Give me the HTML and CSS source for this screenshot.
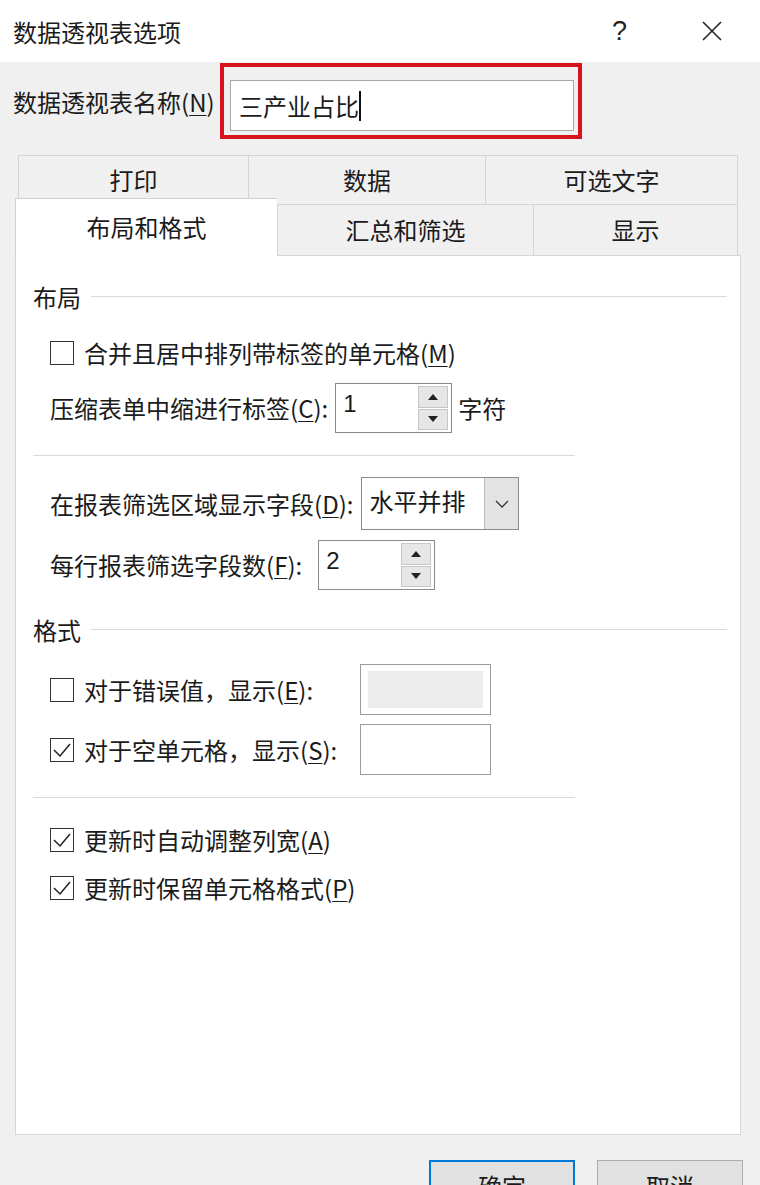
FILE: index.html
```html
<!DOCTYPE html>
<html lang="zh-CN">
<head>
    <meta charset="UTF-8">
    <meta name="viewport" content="width=device-width, initial-scale=1.0">
    <title>数据透视表选项</title>
    <link rel="stylesheet" href="styles.css">
</head>
<body>
    <div class="titlebar">
        <div class="title">数据透视表选项</div>
        <div class="help">?</div>
        <div class="close">
            <svg width="20" height="20" viewBox="0 0 20 20"><path d="M1 1 L19 19 M19 1 L1 19" stroke="#222" stroke-width="1.6" fill="none"/></svg>
        </div>
    </div>

    <div class="dialog">
        <div class="name-row">
            <label class="name-label">数据透视表名称(<u>N</u>)</label>
            <div class="highlight">
                <div class="name-input">三产业占比<span class="caret"></span></div>
            </div>
        </div>

        <div class="tabs">
            <div class="tab-row back">
                <div class="tab t-print">打印</div>
                <div class="tab t-data">数据</div>
                <div class="tab t-alt">可选文字</div>
            </div>
            <div class="tab-row front">
                <div class="tab t-layout active">布局和格式</div>
                <div class="tab t-sum">汇总和筛选</div>
                <div class="tab t-show">显示</div>
            </div>
        </div>

        <div class="panel">
            <div class="group-head"><span>布局</span><div class="rule"></div></div>

            <div class="row r-merge">
                <span class="check"></span>
                <span>合并且居中排列带标签的单元格(<u>M</u>)</span>
            </div>

            <div class="row r-indent">
                <span>压缩表单中缩进行标签(<u>C</u>):</span>
                <div class="spin s-indent">
                    <div class="spin-value">1</div>
                    <div class="spin-btns">
                        <div class="spin-btn"><svg width="10" height="6" viewBox="0 0 10 6"><path d="M0 6 L5 0 L10 6z" fill="#222"/></svg></div>
                        <div class="spin-btn"><svg width="10" height="6" viewBox="0 0 10 6"><path d="M0 0 L5 6 L10 0z" fill="#222"/></svg></div>
                    </div>
                </div>
                <span class="unit">字符</span>
            </div>

            <div class="sep"></div>

            <div class="row r-filter">
                <span>在报表筛选区域显示字段(<u>D</u>):</span>
                <div class="combo">
                    <div class="combo-value">水平并排</div>
                    <div class="combo-btn"><svg width="14" height="8" viewBox="0 0 14 8"><path d="M1 1 L7 7 L13 1" stroke="#333" stroke-width="1.3" fill="none"/></svg></div>
                </div>
            </div>

            <div class="row r-count">
                <span>每行报表筛选字段数(<u>F</u>):</span>
                <div class="spin s-count">
                    <div class="spin-value">2</div>
                    <div class="spin-btns">
                        <div class="spin-btn"><svg width="10" height="6" viewBox="0 0 10 6"><path d="M0 6 L5 0 L10 6z" fill="#222"/></svg></div>
                        <div class="spin-btn"><svg width="10" height="6" viewBox="0 0 10 6"><path d="M0 0 L5 6 L10 0z" fill="#222"/></svg></div>
                    </div>
                </div>
            </div>

            <div class="group-head g-format"><span>格式</span><div class="rule"></div></div>

            <div class="row r-error">
                <div class="check-label">
                    <span class="check"></span>
                    <span>对于错误值，显示(<u>E</u>):</span>
                </div>
                <div class="text-box disabled"><div class="box-fill"></div></div>
            </div>

            <div class="row r-empty">
                <div class="check-label">
                    <span class="check checked"><svg width="22" height="22" viewBox="0 0 22 22"><path d="M3 11 L9 17 L19 5" stroke="#222" stroke-width="1.5" fill="none"/></svg></span>
                    <span>对于空单元格，显示(<u>S</u>):</span>
                </div>
                <div class="text-box"></div>
            </div>

            <div class="sep s-second"></div>

            <div class="row r-autofit">
                <span class="check checked"><svg width="22" height="22" viewBox="0 0 22 22"><path d="M3 11 L9 17 L19 5" stroke="#222" stroke-width="1.5" fill="none"/></svg></span>
                <span>更新时自动调整列宽(<u>A</u>)</span>
            </div>

            <div class="row r-keep">
                <span class="check checked"><svg width="22" height="22" viewBox="0 0 22 22"><path d="M3 11 L9 17 L19 5" stroke="#222" stroke-width="1.5" fill="none"/></svg></span>
                <span>更新时保留单元格格式(<u>P</u>)</span>
            </div>
        </div>

        <div class="buttons">
            <button class="btn primary">确定</button>
            <button class="btn">取消</button>
        </div>
    </div>
</body>
</html>
```

FILE: styles.css
```css
body {
    margin: 0;
    padding: 0;
    width: 760px;
    height: 1185px;
    overflow: hidden;
    background-color: #f0f0f0;
    font-family: "Noto Sans CJK SC", "Noto Sans", sans-serif;
    font-size: 24px;
    color: #1b1b1b;
}
u {
    text-decoration-thickness: 1px;
    text-underline-offset: 3px;
}

/* 标题栏 */
.titlebar {
    height: 62px;
    background: #ffffff;
    display: flex;
    align-items: center;
}
.title {
    flex: 1;
    padding-left: 13px;
    font-size: 24px;
}
.help {
    width: 20px;
    margin-right: 70px;
    font-family: "Liberation Sans", sans-serif;
    font-size: 27px;
    color: #222;
}
.close {
    width: 20px;
    height: 20px;
    margin-right: 38px;
    display: flex;
}

.dialog {
    padding: 1px 0 0 0;
}

/* 名称 */
.name-row {
    display: flex;
    align-items: center;
    padding-left: 13px;
}
.name-label {
    width: 207px;
    white-space: nowrap;
}
.highlight {
    width: 362px;
    height: 76px;
    border: 4px solid #d7141e;
    padding: 13px 4px 4px 6px;
    box-sizing: border-box;
}
.name-input {
    height: 51px;
    box-sizing: border-box;
    background: #ffffff;
    border: 1px solid #a8a8a8;
    padding-left: 8px;
    line-height: 48px;
    display: flex;
    align-items: center;
}
.caret {
    display: inline-block;
    width: 1.5px;
    height: 30px;
    background: #111;
}

/* 选项卡 */
.tabs {
    margin-top: 16px;
    margin-left: 15px;
    width: 726px;
}
.tab-row {
    display: flex;
}
.tab {
    box-sizing: border-box;
    text-align: center;
    background: #f0f0f0;
    border: 1px solid #d6d6d6;
    border-bottom: none;
}
.back {
    padding-left: 3px;
    height: 49px;
}
.back .tab {
    height: 49px;
    line-height: 48px;
    border-right: none;
}
.back .t-alt {
    border-right: 1px solid #d6d6d6;
}
.t-print { width: 230px; }
.t-data { width: 237px; }
.t-alt { width: 253px; }

.front {
    height: 51px;
    align-items: flex-end;
}
.front .tab {
    height: 51px;
    line-height: 50px;
    border-right: none;
}
.front .t-show {
    border-right: 1px solid #d6d6d6;
}
.t-layout { width: 262px; }
.t-sum { width: 256px; }
.t-show { width: 205px; }
.tab.active {
    background: #ffffff;
    height: 58px;
    line-height: 56px;
    margin-bottom: -1px;
    position: relative;
    z-index: 1;
    border-color: #d0d0d0;
}

/* 内容面板 */
.panel {
    margin-left: 15px;
    width: 726px;
    height: 880px;
    box-sizing: border-box;
    background: #ffffff;
    border: 1px solid #d6d6d6;
    padding: 24px 13px 0 17px;
}
.group-head {
    display: flex;
    align-items: center;
    height: 34px;
    line-height: 34px;
}
.rule {
    flex: 1;
    height: 1px;
    background: #d9d9d9;
    margin-left: 10px;
    margin-top: -2px;
}
.row {
    display: flex;
    align-items: center;
    padding-left: 17px;
    line-height: 34px;
    white-space: nowrap;
}
.check {
    width: 24px;
    height: 24px;
    box-sizing: border-box;
    border: 1.5px solid #333;
    background: #fff;
    margin-right: 10px;
    display: flex;
    align-items: center;
    justify-content: center;
    flex: none;
}
.check-label {
    display: flex;
    align-items: center;
    width: 301px;
}

.r-merge { margin-top: 22px; height: 34px; }
.r-indent { margin-top: 13px; height: 50px; }
.sep {
    width: 542px;
    height: 1px;
    background: #d9d9d9;
    margin-top: 22px;
}
.r-filter { margin-top: 21px; height: 53px; }
.r-count { margin-top: 10px; height: 50px; }
.g-format { margin-top: 23px; }
.r-error { margin-top: 17px; height: 51px; }
.r-empty { margin-top: 9px; height: 51px; }
.s-second { margin-top: 22px; }
.r-autofit { margin-top: 25px; height: 34px; }
.r-keep { margin-top: 14px; height: 34px; }

/* 数值调节框 */
.spin {
    display: flex;
    height: 50px;
    width: 117px;
    box-sizing: border-box;
    border: 1px solid #8a8a8a;
    background: #fff;
    margin-left: 7px;
}
.s-count {
    margin-left: 16px;
}
.spin-value {
    flex: 1;
    padding-left: 7px;
    line-height: 40px;
    font-family: "Liberation Sans", sans-serif;
}
.spin-btns {
    width: 30px;
    margin: 2px 3px 2px 0;
    display: flex;
    flex-direction: column;
    gap: 1px;
}
.spin-btn {
    flex: 1;
    background: #e6e6e6;
    border: 1px solid #c6c6c6;
    display: flex;
    align-items: center;
    justify-content: center;
}
.unit {
    margin-left: 6px;
}

/* 下拉框 */
.combo {
    display: flex;
    height: 53px;
    width: 158px;
    box-sizing: border-box;
    border: 1px solid #8a8a8a;
    background: #fff;
    margin-left: 8px;
}
.combo-value {
    flex: 1;
    padding-left: 7px;
    line-height: 46px;
}
.combo-btn {
    width: 33px;
    background: #e3e3e3;
    border-left: 1px solid #b9b9b9;
    display: flex;
    align-items: center;
    justify-content: center;
}

/* 文本框 */
.text-box {
    width: 131px;
    height: 51px;
    box-sizing: border-box;
    border: 1px solid #9b9b9b;
    background: #fff;
    margin-left: 9px;
    padding: 6px 7px;
}
.box-fill {
    height: 100%;
    background: #ececec;
}

/* 按钮 */
.buttons {
    display: flex;
    justify-content: flex-end;
    gap: 22px;
    padding-right: 17px;
    margin-top: 25px;
}
.btn {
    width: 146px;
    height: 50px;
    box-sizing: border-box;
    background: #e1e1e1;
    border: 1px solid #adadad;
    font-family: "Noto Sans CJK SC", sans-serif;
    font-size: 24px;
    color: #1b1b1b;
    padding: 0;
}
.btn.primary {
    border: 2px solid #0078d7;
}
```
